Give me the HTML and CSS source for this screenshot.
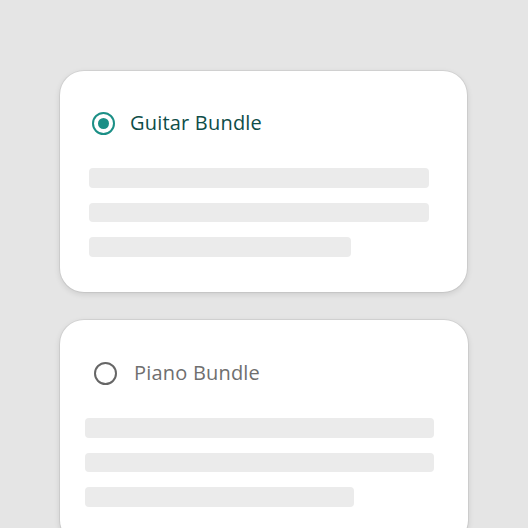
FILE: index.html
```html
<!DOCTYPE html>
<html>
<head>
<meta charset="utf-8">
<link rel="stylesheet" href="styles.css">
</head>
<body>
<main class="list">
  <section class="card card--selected">
    <div class="option">
      <span class="radio radio--on"><span class="dot"></span></span>
      <span class="label">Guitar Bundle</span>
    </div>
    <div class="lines">
      <div class="line"></div>
      <div class="line"></div>
      <div class="line line--short"></div>
    </div>
  </section>
  <section class="card card--plain">
    <div class="option">
      <span class="radio"></span>
      <span class="label">Piano Bundle</span>
    </div>
    <div class="lines">
      <div class="line"></div>
      <div class="line"></div>
      <div class="line line--short"></div>
    </div>
  </section>
</main>
</body>
</html>
```
FILE: styles.css
```css
html, body {
  margin: 0;
  height: 100%;
  overflow: hidden;
}
body {
  background: #e5e5e5;
  font-family: "Open Sans", "Liberation Sans", sans-serif;
}
.list {
  display: flex;
  flex-direction: column;
  gap: 28px;
  padding: 71px 0 0 60px;
}
.card {
  background: #fff;
  border-radius: 24px;
  box-shadow: 0 0 0 1px rgba(0,0,0,0.06), 0 2px 6px rgba(0,0,0,0.12);
  box-sizing: border-box;
}
.card--selected {
  width: 407px;
  height: 221px;
  padding: 41px 38px 0 29px;
}
.card--plain {
  width: 408px;
  height: 224px;
  padding: 42px 34px 0 25px;
}
.option {
  display: flex;
  align-items: center;
  gap: 15px;
  height: 23px;
  margin-left: 3px;
}
.card--plain .option {
  margin-left: 9px;
  gap: 17px;
}
.radio {
  width: 23px;
  height: 23px;
  box-sizing: border-box;
  border-radius: 50%;
  border: 2px solid #666;
  display: flex;
  align-items: center;
  justify-content: center;
  flex: none;
}
.radio--on {
  border-color: #1b8f86;
}
.dot {
  width: 11px;
  height: 11px;
  border-radius: 50%;
  background: #1b8f86;
}
.label {
  font-size: 20px;
  letter-spacing: 0.2px;
  color: #6f6f6f;
  line-height: 21px;
  padding-bottom: 2px;
}
.card--selected .label {
  color: #0e4d48;
}
.lines {
  display: flex;
  flex-direction: column;
  gap: 15px;
  margin-top: 33px;
}
.line {
  height: 19.5px;
  background: #ebebeb;
  border-radius: 4px;
}
.line--short {
  width: 77%;
}
```
